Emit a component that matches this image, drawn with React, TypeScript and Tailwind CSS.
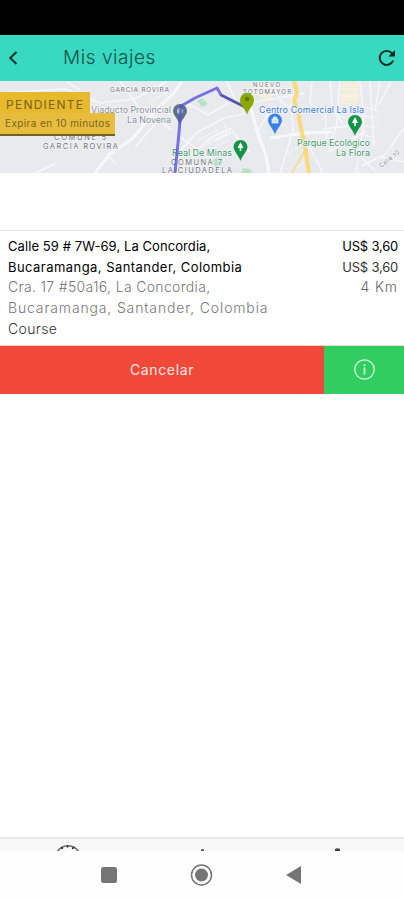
import React from "react";

const trip = {
  status: "PENDIENTE",
  expires: "Expira en 10 minutos",
  price: "US$ 3,60",
  total: "US$ 3,60",
  distance: "4 Km",
  service: "Course",
};

const Pin = ({ x, y, color }: { x: number; y: number; color: string }) => (
  <path
    transform={`translate(${x} ${y})`}
    d="M0 10C-1.5 5-7-.5-7-4a7 7 0 0 1 14 0C7-.5 1.500 5 0 10z"
    fill={color}
  />
);

const TripMap = () => (
  <svg className="block h-[92px] w-full" viewBox="0 0 404 92" fontFamily="Inter, sans-serif">
    <rect width="404" height="92" fill="#e9eaee" />
    <path d="M343 0h16v23h-18zM256 12l11-8 8 8-8 8z" fill="#f6edda" />
    <path d="M197 20l5-3 6 6-6 3zM243 87l7 1 3 4h-12zM213 79l6-3 4 4-3 8-5-2z" fill="#b8e2c8" />
    <g stroke="#f7f8fa" fill="none">
      <path strokeWidth="3" d="M95 92l15-19 22-15 26-31 16-15 8-12M249 20l8 30 9 25 3 17M270 57l35-5 27-1" />
      <path strokeWidth="1.5" d="M0 12l65-4 35 14 35-4 32-18M66 0l15 10M107 73l9 10M35 92l20-9M120 0l20 28 31 20M135 66l22-25M183 20l25 14 20-12M178 72l18-20 28-15 24-5M190 75l22-19 20-9M215 60l16-9M232 50l18 22M180 56l18 12M226 0l13 25M250 22l55-10M257 51l15-24M270 0l12 22 15 8M280 92l13-42-2-34M305 58l13 24 5 10M312 0l-2 22 15 10 2 25M330 0l2 25 11 18M323 48l25-3M330 70l36-20M340 0l-3 42-8 30M360 0l4 40-8 52M370 0l4 65M380 0l-5 30M391 0l-12 24M361 85l25-12 18-26M350 65l25 25M380 76l24 5" />
      <path strokeWidth="1" d="M197 60l20-11M202 66l23-13M209 70l20-11M213 43l7 12M222 39l8 15M267 35l18 9M285 74l14-8M292 88l14-7M338 8h20M337 15h22M331 32l14 5M366 26l12 4M365 35l12 2M364 45l13 1M362 54l12 2M151 20l20-10M153 27l18 5M158 39l11 8" />
    </g>
    <path d="M294 0l3 12-3 8 4 10 2 12 2 10 2 8 2 11 1 9 2 12" fill="none" stroke="#f9d978" strokeWidth="4" />
    <path d="M306 68l-14 24" stroke="#f9d978" strokeWidth="1.5" />
    <g fill="#6b7078" stroke="#f7f8fa" strokeWidth="1.5" paintOrder="stroke">
      <text x="110" y="11" fontSize="6.5" textLength="59">GARCIA ROVIRA</text>
      <text x="253" y="6" fontSize="6" textLength="27">NUEVO</text>
      <text x="243" y="13" fontSize="6" textLength="48">SOTOMAYOR</text>
      <text x="54" y="59" fontSize="7.5" textLength="52">COMUNE 5</text>
      <text x="43" y="68" fontSize="7.5" textLength="75">GARCIA ROVIRA</text>
      <text x="171" y="83.5" fontSize="7.5" textLength="51">COMUNA 7</text>
      <text x="162" y="92" fontSize="7.5" textLength="70">LA CIUDADELA</text>
      <text x="91" y="31.5" fontSize="9" fill="#85909b" textLength="80">Viaducto Provincial</text>
      <text x="127" y="41.5" fontSize="9" fill="#85909b" textLength="44">La Novena</text>
      <text transform="translate(381 87) rotate(-38)" fontSize="6" fill="#85888d" textLength="24">Calle 10</text>
    </g>
    <g fontSize="9" stroke="#f7f8fa" strokeWidth="1.5" paintOrder="stroke">
      <text x="259" y="31.5" fill="#3878dc" textLength="105">Centro Comercial La Isla</text>
      <text x="172" y="74.5" fill="#3f9767" textLength="60">Real De Minas</text>
      <text x="297" y="65" fill="#3f9767" textLength="73">Parque Ecológico</text>
      <text x="336" y="75" fill="#3f9767" textLength="34">La Flora</text>
    </g>
    <Pin x={180} y={34} color="#5e7280" />
    <circle cx="180" cy="30" r="3" fill="#b9c6d2" />
    <path d="M175 92l4-40 2-27 14-8 22-10 4 7 26 13" fill="none" stroke="#5551dd" strokeOpacity=".78" strokeWidth="3" strokeLinejoin="round" />
    <path d="M221 14l26 13" stroke="#5354a5" strokeWidth="2.5" />
    <path d="M247 34c-1-6-7-9-7-15a7 7 0 0 1 14 0c0 6-6 9-7 15z" fill="#8ba800" />
    <circle cx="247" cy="18" r="2.2" fill="#5f7600" />
    <Pin x={275} y={43.5} color="#3983e9" />
    <path d="M272 38h6v4h-6zM273.500 38v-2h3v2" fill="#cce0fa" stroke="#fff" strokeWidth=".7" />
    <Pin x={240.500} y={70} color="#159447" />
    <path d="M240.500 61l3 6h-2.200v3h-1.600v-3h-2.200z" fill="#fff" />
    <Pin x={355} y={45} color="#159447" />
    <path d="M355 36l3 6h-2.200v3h-1.600v-3H352z" fill="#fff" />
  </svg>
);

const App = () => {
  return (
    <div className="flex h-[900px] w-[404px] flex-col overflow-hidden bg-white font-['Inter',sans-serif] text-black">
      <div className="h-[35px] shrink-0 bg-black" />
      <header className="flex h-[46px] shrink-0 items-center bg-[#37dac0] pr-[8px] pl-[8px]">
        <svg className="h-[14px] w-[10px]" viewBox="0 0 10 14" fill="none" stroke="#082d29" strokeWidth="2">
          <path d="M8.500 1L2.200 7l6.300 6" />
        </svg>
        <h1 className="ml-[45px] text-[19px] font-light tracking-[0.550px] text-[#174f49]">Mis viajes</h1>
        <svg className="ml-auto h-[18px] w-[18px]" viewBox="0 0 18 18" fill="none" stroke="#082622" strokeWidth="1.9">
          <path d="M15.200 11.500A7 7 0 1 1 14 4.300L16 6.200" />
          <path d="M17 1v6.500h-6.500z" fill="#082622" stroke="none" />
        </svg>
      </header>

      <div className="relative h-[92px] shrink-0">
        <TripMap />
        <div className="absolute top-[11px] left-0 flex flex-col items-start text-[#7a6420]">
          <div className="h-[21px] w-[90px] bg-[#e7b92c] pl-[6px] text-[12px] leading-[26px] tracking-[1.250px] whitespace-nowrap">
            {trip.status}
          </div>
          <div className="h-[23px] w-[115px] border-b-2 border-[#75621f] bg-[#e7bd3d] pl-[5px] text-[10px] leading-[20px] tracking-[0.400px] whitespace-nowrap">
            {trip.expires}
          </div>
        </div>
      </div>

      <section className="mt-[57px] flex h-[115px] shrink-0 justify-between border-t border-[#e7e7e7] pt-[5px] pr-[6px] pl-[8px] text-[13px] leading-[20.700px] whitespace-nowrap">
        <div>
          <p className="tracking-[0.080px]">Calle 59 # 7W-69, La Concordia,</p>
          <p className="tracking-[0.450px]">Bucaramanga, Santander, Colombia</p>
          <p className="text-[14px] font-light tracking-[0.330px] text-[#777]">Cra. 17 #50a16, La Concordia,</p>
          <p className="text-[14px] font-light tracking-[0.850px] text-[#777]">Bucaramanga, Santander, Colombia</p>
          <p className="text-[14px] font-light tracking-[0.350px] text-[#333]">{trip.service}</p>
        </div>
        <div className="text-right">
          <p className="tracking-[-0.200px]">{trip.price}</p>
          <p className="tracking-[-0.200px] text-[#333]">{trip.total}</p>
          <p className="text-[14px] font-light tracking-[0.900px] text-[#666]">{trip.distance}</p>
        </div>
      </section>

      <div className="flex h-[49px] shrink-0 border-t border-[#f8d7ce] text-white">
        <button className="h-[48px] w-[324px] bg-[#f04839] pb-[2px] text-[14px] tracking-[0.650px] text-[#ffe9e6]">Cancelar</button>
        <button className="flex h-[48px] w-[80px] items-center justify-center bg-[#32cd60]">
          <svg className="h-[22px] w-[22px]" viewBox="0 0 22 22" fill="none" stroke="#d8ffe2" strokeWidth="1.300">
            <circle cx="11.500" cy="10.500" r="9.700" />
            <path d="M11.500 8.500v7M11.500 5.300v1.700" strokeWidth="1.700" />
          </svg>
        </button>
      </div>

      <main className="flex-1" />

      <div className="h-[14px] shrink-0 border-t-2 border-[#e7e7e7] bg-[#f8f8f8]">
        <svg className="block h-[12px] w-full" viewBox="0 0 404 12" fill="none">
          <path d="M57.500 12.500a12.500 12.500 0 0 1 21 0" stroke="#666" strokeWidth="1.600" />
          <path d="M61 8.500l2 1M67.500 6.500v2M74 8.500l-2 1" stroke="#222" strokeWidth="1.600" />
          <path d="M201 12v-1.500q2-1 3 0V12z" fill="#555" />
          <path d="M335 12v-2q2.500-1.500 5 0v2z" fill="#444" />
        </svg>
      </div>
      <nav className="h-[49px] shrink-0 bg-[#fefefe]">
        <svg className="block h-[49px] w-full" viewBox="0 0 404 49">
          <rect x="101" y="16" width="16" height="16" rx="2.500" fill="#757575" />
          <circle cx="201.500" cy="24" r="10" fill="none" stroke="#757575" strokeWidth="1.500" />
          <circle cx="201.500" cy="24" r="6.500" fill="#757575" />
          <path d="M286 24l15-9v18z" fill="#757575" />
        </svg>
      </nav>
    </div>
  );
};

export default App;
